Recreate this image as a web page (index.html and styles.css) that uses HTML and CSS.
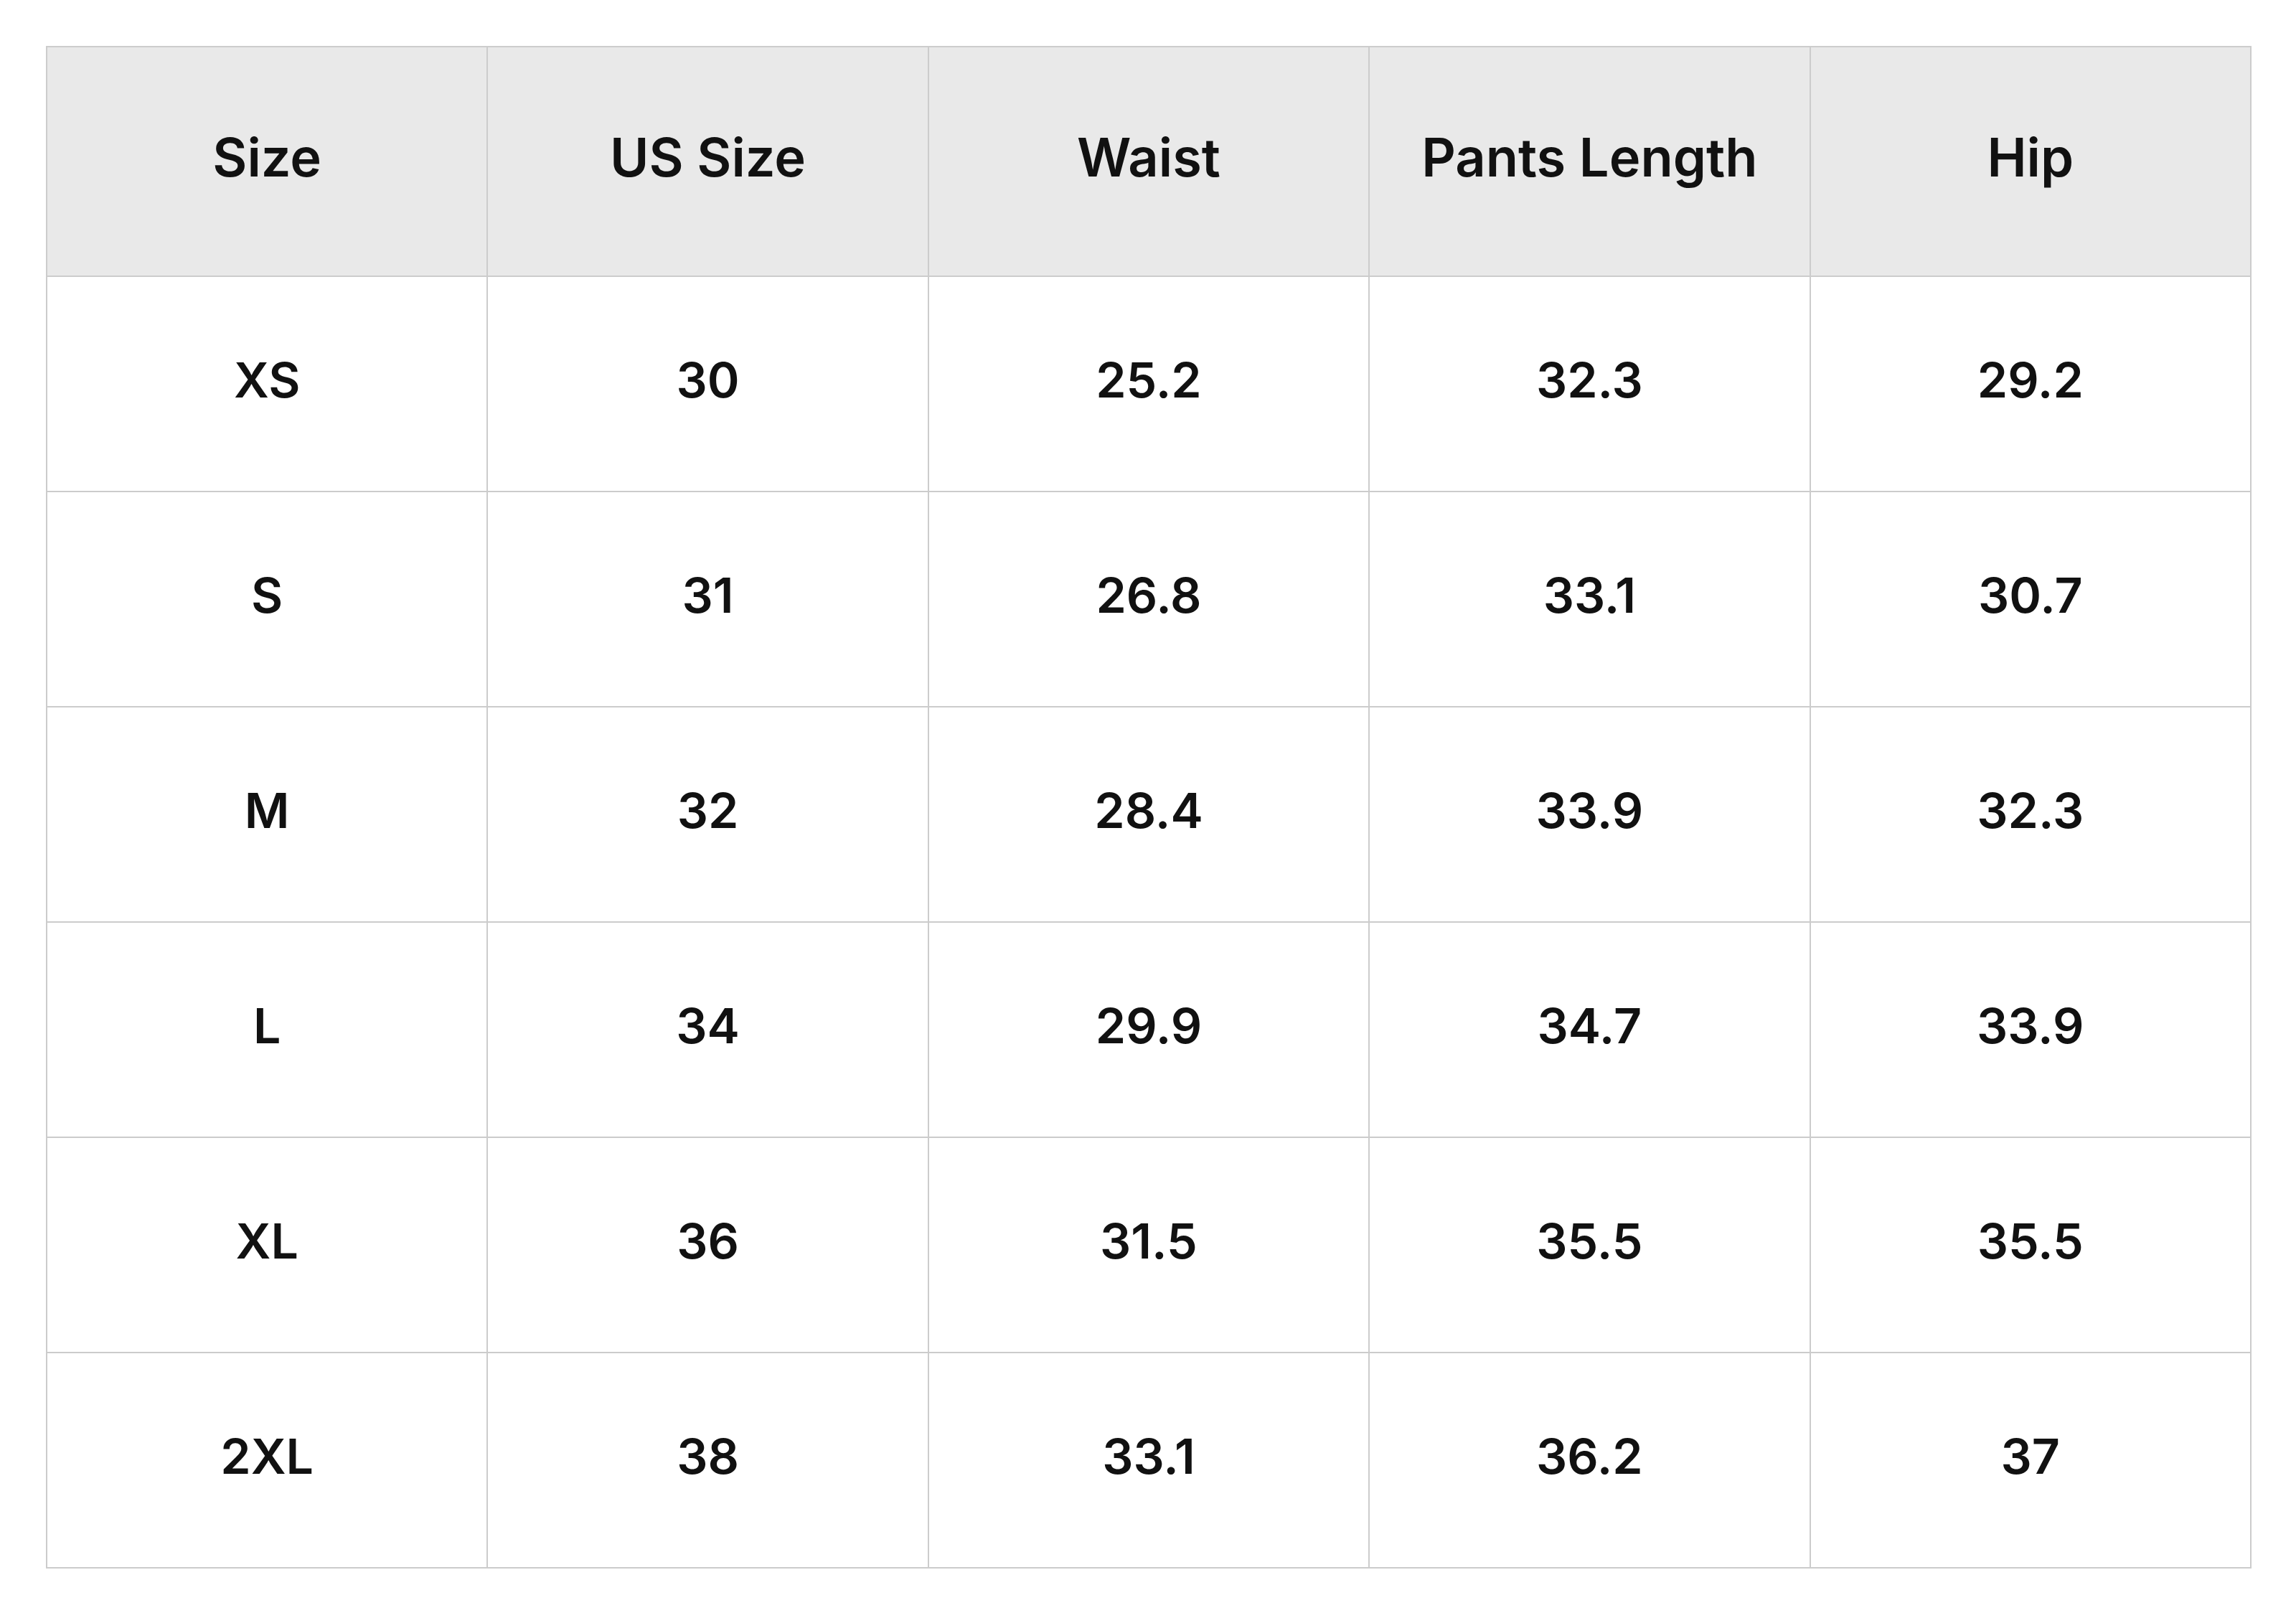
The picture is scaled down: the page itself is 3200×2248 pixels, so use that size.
FILE: index.html
```html
<!DOCTYPE html>
<html lang="en">
<head>
<meta charset="utf-8">
<title>Size Chart</title>
<link rel="stylesheet" href="styles.css">
</head>
<body>
<main class="page">
  <table class="size-table">
    <thead>
      <tr>
        <th>Size</th>
        <th>US Size</th>
        <th>Waist</th>
        <th>Pants Length</th>
        <th>Hip</th>
      </tr>
    </thead>
    <tbody>
      <tr><td>XS</td><td>30</td><td>25.2</td><td>32.3</td><td>29.2</td></tr>
      <tr><td>S</td><td>31</td><td>26.8</td><td>33.1</td><td>30.7</td></tr>
      <tr><td>M</td><td>32</td><td>28.4</td><td>33.9</td><td>32.3</td></tr>
      <tr><td>L</td><td>34</td><td>29.9</td><td>34.7</td><td>33.9</td></tr>
      <tr><td>XL</td><td>36</td><td>31.5</td><td>35.5</td><td>35.5</td></tr>
      <tr><td>2XL</td><td>38</td><td>33.1</td><td>36.2</td><td>37</td></tr>
    </tbody>
  </table>
</main>
</body>
</html>
```
FILE: styles.css
```css
html, body {
  margin: 0;
  padding: 0;
  background: #ffffff;
}

.page {
  padding: 64px;
}

.size-table {
  width: 3074px;
  table-layout: fixed;
  border-collapse: collapse;
  font-family: Inter, "Noto Sans", sans-serif;
  color: #111111;
}

.size-table th,
.size-table td {
  border: 2px solid #cccccc;
  text-align: center;
  vertical-align: middle;
  padding: 0 0 12px 0;
}

.size-table th {
  background: #e9e9e9;
  height: 306px;
  font-size: 74px;
  font-weight: 600;
}

.size-table td {
  height: 286px;
  font-size: 68px;
  font-weight: 600;
}
```
